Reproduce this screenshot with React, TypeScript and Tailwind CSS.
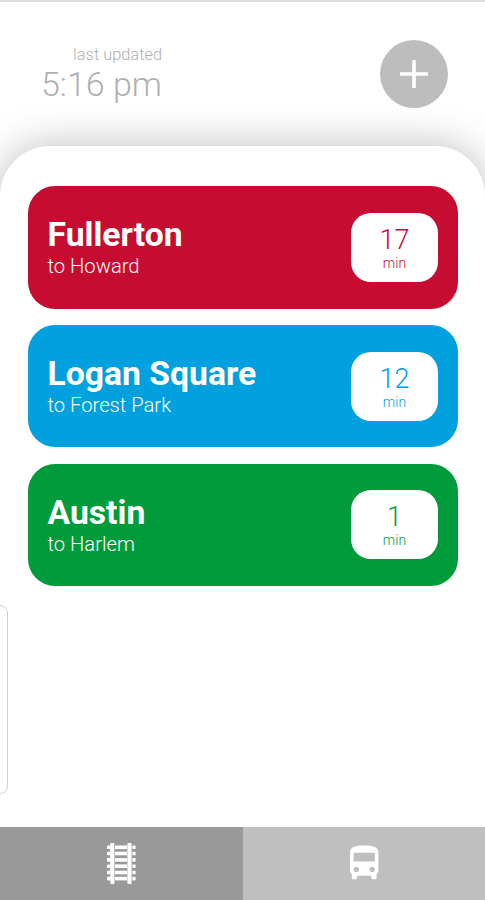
type Arrival = {
  station: string;
  destination: string;
  minutes: number;
  card: string;
  text: string;
};

const arrivals: Arrival[] = [
  { station: 'Fullerton', destination: 'Howard', minutes: 17, card: 'bg-[#c60c30]', text: 'text-[#c60c30]' },
  { station: 'Logan Square', destination: 'Forest Park', minutes: 12, card: 'bg-[#00a1de]', text: 'text-[#00a1de]' },
  { station: 'Austin', destination: 'Harlem', minutes: 1, card: 'bg-[#009b3a]', text: 'text-[#009b3a]' },
];

const rungs = [2.5, 8.7, 15.1, 21.4, 27.7, 33.8];

const TrackIcon = () => (
  <svg width="29" height="41" viewBox="0 0 29 41" fill="currentColor">
    <rect x="3.2" y="0" width="4.2" height="41" rx="1" />
    <rect x="20.4" y="0" width="4.2" height="41" rx="1" />
    {rungs.map((y) => (
      <g key={y}>
        <rect x="0" y={y} width="3.4" height="3.6" rx="0.8" />
        <rect x="8" y={y} width="12" height="3.6" />
        <rect x="25.4" y={y} width="3.2" height="3.6" rx="0.8" />
      </g>
    ))}
  </svg>
);

const BusIcon = () => (
  <svg width="42.5" height="42.5" viewBox="0 0 24 24" fill="currentColor">
    <path d="M4 16c0 .88.39 1.67 1 2.22V20c0 .55.45 1 1 1h1c.55 0 1-.45 1-1v-1h8v1c0 .55.45 1 1 1h1c.55 0 1-.45 1-1v-1.78c.61-.55 1-1.34 1-2.22V6c0-3.5-3.58-4-8-4s-8 .5-8 4v10zm3.5 1c-.83 0-1.5-.67-1.5-1.5S6.67 14 7.5 14s1.5.67 1.5 1.5S8.33 17 7.5 17zm9 0c-.83 0-1.5-.67-1.5-1.5s.67-1.5 1.5-1.5 1.5.67 1.5 1.5-.67 1.5-1.5 1.5zm1.5-6H6V6h12v5z" />
  </svg>
);

const ArrivalCard = ({ station, destination, minutes, card, text }: Arrival) => (
  <li className={`flex h-[122.5px] items-center justify-between rounded-[27px] px-5 ${card}`}>
    <div className="pt-[3px] text-white">
      <h2 className="text-[33.7px] leading-[36px] font-bold">{station}</h2>
      <p className="text-[20.2px] leading-[27px] font-light">to {destination}</p>
    </div>
    <div className={`flex h-[69px] w-[87px] flex-col items-center rounded-[20px] bg-white pt-3 pl-px ${text}`}>
      <span className="text-[27px] leading-[31px] font-light">{minutes}</span>
      <span className="text-[14px] leading-[14px] font-light">min</span>
    </div>
  </li>
);

const App = () => {
  return (
    <div className="relative flex h-[900px] w-full flex-col overflow-hidden border-t-2 border-[#dcdcdc] bg-white font-[Roboto,sans-serif]">
      <header className="flex h-[143.5px] shrink-0 items-start justify-between pr-[37px] pl-[41px]">
        <div className="pt-[43px] text-right text-[#b0b0b0]">
          <p className="text-[16.4px] leading-[20px] font-light">last updated</p>
          <p className="text-[34px] leading-[38px] font-light">5:16 pm</p>
        </div>
        <button
          aria-label="Add stop"
          className="mt-[38px] flex size-[68px] items-center justify-center rounded-full bg-[#bdbdbd] text-white"
        >
          <svg width="30" height="30" viewBox="0 0 30 30" stroke="currentColor" strokeWidth="3.6">
            <path d="M15 1v28M1 15h28" />
          </svg>
        </button>
      </header>

      <main className="flex-1 rounded-t-[50px] bg-white px-[27.5px] pt-[40.5px] shadow-[0_0_42px_rgba(0,0,0,0.27)]">
        <ul className="flex flex-col gap-[16.3px]">
          {arrivals.map((arrival) => (
            <ArrivalCard key={arrival.station} {...arrival} />
          ))}
        </ul>
      </main>

      {/* Edge of the drawer */}
      <div className="absolute top-[603px] -left-[20px] h-[189px] w-[27.5px] rounded-[8px] border border-[#d2d2d2] bg-white" />

      <nav className="grid h-[73px] shrink-0 grid-cols-2 text-white">
        <button aria-label="Trains" className="flex items-center justify-center bg-[#999999]">
          <TrackIcon />
        </button>
        <button aria-label="Buses" className="flex items-center justify-center bg-[#bfbfbf]">
          <BusIcon />
        </button>
      </nav>
    </div>
  );
};

export default App;
